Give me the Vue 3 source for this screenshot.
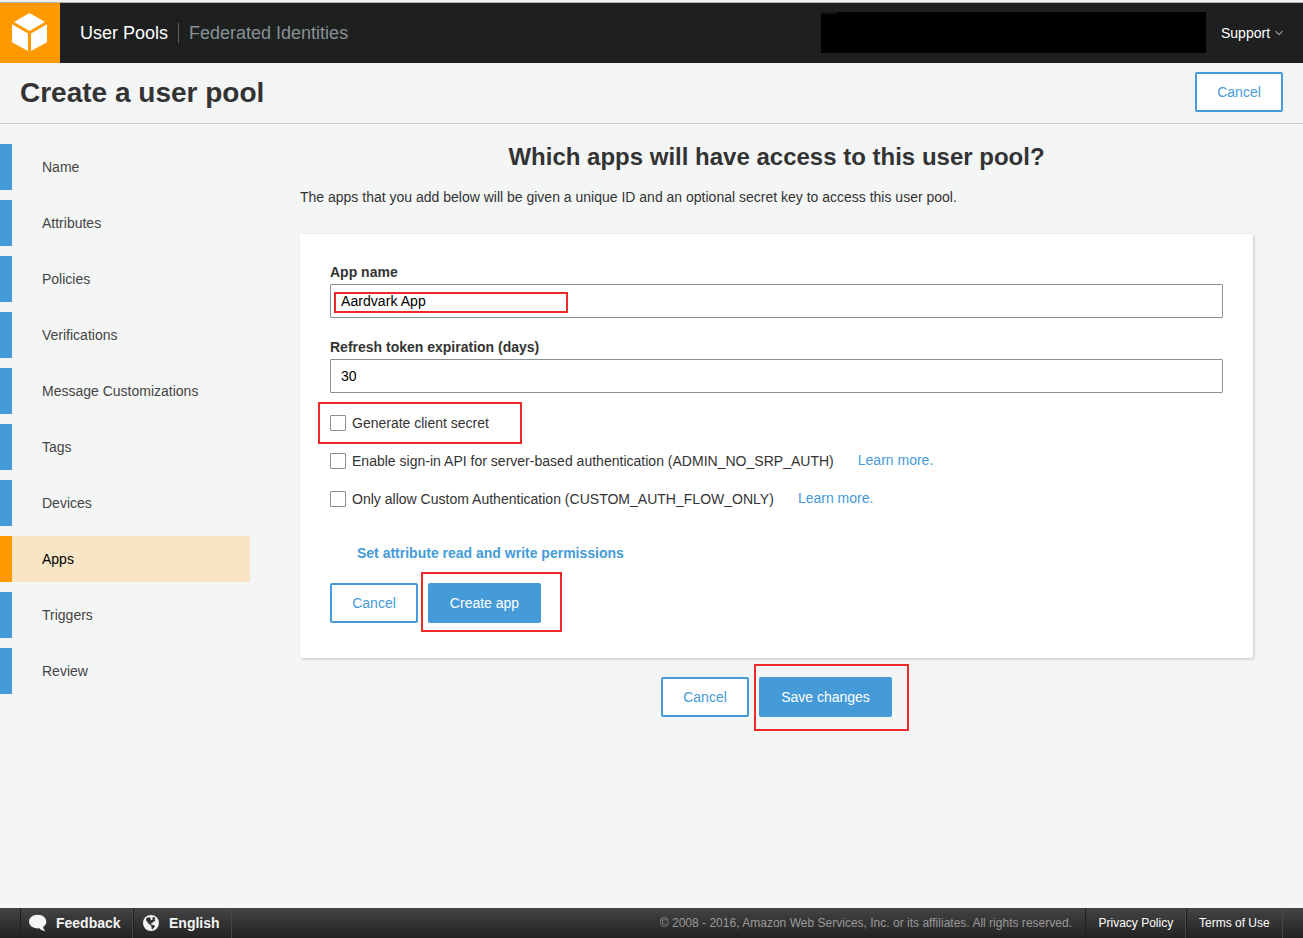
<script setup>
const steps = ['Name', 'Attributes', 'Policies', 'Verifications', 'Message Customizations', 'Tags', 'Devices', 'Apps', 'Triggers', 'Review']
const options = [
  { label: 'Generate client secret', marked: true },
  { label: 'Enable sign-in API for server-based authentication (ADMIN_NO_SRP_AUTH)', link: true },
  { label: 'Only allow Custom Authentication (CUSTOM_AUTH_FLOW_ONLY)', link: true }
]
</script>

<template>
  <div class="page">
    <div class="edge"></div>
    <header class="topbar">
      <div class="logo">
        <svg width="60" height="60" viewBox="0 0 60 60">
          <path d="M29.500 10L45 19L29.500 28L14 19Z M12 21.200L28 30.500V48L12 39.200Z M47 21.200L31 30.500V48L47 39.200Z" fill="#fff" />
        </svg>
      </div>
      <nav class="services">
        <span class="current">User Pools</span>
        <span class="divider"></span>
        <span class="other">Federated Identities</span>
      </nav>
      <div class="account"><i></i></div>
      <div class="support">
        <span>Support</span>
        <svg width="8" height="6" viewBox="0 0 8 6"><path d="M0.500 1.200L4 4.700L7.500 1.200" fill="none" stroke="#999ea1" stroke-width="1.100" /></svg>
      </div>
    </header>

    <section class="titlebar">
      <h1>Create a user pool</h1>
      <button class="btn">Cancel</button>
    </section>

    <div class="body">
      <aside class="steps">
        <div v-for="s in steps" :key="s" class="step" :class="{ active: s === 'Apps' }">{{ s }}</div>
      </aside>
      <main class="content">
        <h2>Which apps will have access to this user pool?</h2>
        <p class="intro">The apps that you add below will be given a unique ID and an optional secret key to access this user pool.</p>
        <div class="card">
          <label class="field-label">App name</label>
          <div class="field name">Aardvark App<i class="mark mark-name"></i></div>
          <label class="field-label second">Refresh token expiration (days)</label>
          <div class="field">30</div>
          <div class="options">
            <div v-for="o in options" :key="o.label" class="option">
              <span class="box"></span>
              <span class="text" :class="{ long: o.link }">{{ o.label }}</span>
              <a v-if="o.link" class="learn">Learn more.</a>
              <i v-if="o.marked" class="mark mark-secret"></i>
            </div>
          </div>
          <a class="permissions">Set attribute read and write permissions</a>
          <div class="actions">
            <button class="btn">Cancel</button>
            <div class="marked">
              <button class="btn primary create">Create app</button>
              <i class="mark mark-create"></i>
            </div>
          </div>
        </div>
        <div class="actions page-actions">
          <button class="btn">Cancel</button>
          <div class="marked">
            <button class="btn primary save">Save changes</button>
            <i class="mark mark-save"></i>
          </div>
        </div>
      </main>
    </div>

    <footer class="footer">
      <div class="cell feedback">
        <svg width="18" height="18" viewBox="0 0 18 18"><path d="M8.700 0.800C13.500 0.800 17.300 3.700 17.300 7.600C17.300 9.900 16.200 11.800 14.200 13C14.400 14.500 15.200 16 16.500 17C13.700 17 11.800 16 10.500 14.300C4.800 15 0 12 0 7.600C0 3.700 3.900 0.800 8.700 0.800Z" fill="#f4f4f4" /></svg>
        <span>Feedback</span>
      </div>
      <div class="cell language">
        <svg width="16" height="16" viewBox="0 0 16 16">
          <circle cx="8" cy="8" r="8" fill="#f4f4f4" />
          <path d="M3.200 3.600L4.800 2.500L6.500 2.200L7.900 3.200L7.200 4.300L8.500 5.200L9.800 4.300L9.300 2.800L10.600 1.900L12.400 2.900L11.300 4.300L12.600 4.900L11.500 6.300L10.100 7L8.900 8.500L7.600 8.300L8.300 9.400L10 9.900L12 10.700L11.700 12L10.500 13L9.400 14.600L8.600 13.600L8.500 11.400L7.400 10L5.600 8.800L4.300 7L3 5.300Z" fill="#303030" />
        </svg>
        <span>English</span>
      </div>
      <div class="copyright">© 2008 - 2016, Amazon Web Services, Inc. or its affiliates. All rights reserved.</div>
      <div class="cell legal privacy">Privacy Policy</div>
      <div class="cell legal terms">Terms of Use</div>
    </footer>
  </div>
</template>

<style>
body { margin: 0; background: #f4f6f6; }
</style>

<style scoped>
* { box-sizing: border-box; }
.page { display: flex; flex-direction: column; width: 1303px; height: 938px; overflow: hidden; background: #f4f6f6; color: #333; font: 14px/20px "Liberation Sans", Arial, sans-serif; }
.edge { height: 3px; flex: none; background: #f2f1f0; border-bottom: 1px solid #b0aeac; }
.topbar { height: 60px; flex: none; display: flex; align-items: center; background: #1e201f; color: #fff; }
.logo { width: 60px; height: 60px; background: #f90; }
.logo svg { display: block; }
.services { display: flex; align-items: center; margin-left: 20px; font-size: 18px; }
.divider { width: 1px; height: 20px; margin: 0 10px; background: #5c5f60; }
.other { color: #879196; }
.account { width: 385px; height: 41px; margin: 0 15px 1px auto; background: #000; }
.account i { display: block; width: 16px; height: 2px; background: #151716; }
.support { display: flex; align-items: center; gap: 5px; width: 82px; white-space: nowrap; }
.titlebar { height: 61px; flex: none; display: flex; align-items: center; justify-content: space-between; padding: 0 20px 2px; border-bottom: 1px solid #c8cccc; }
h1 { margin: 2px 0 0; font-size: 28px; line-height: 36px; color: #333; }
.btn { width: 88px; height: 40px; padding: 0; border: 2px solid #449bd8; border-radius: 2px; background: #fff; color: #449bd8; font: inherit; }
.btn.primary { background: #449bd8; color: #fff; display: block; }
.create { width: 113px; }
.save { width: 133px; }
.body { flex: 1; display: flex; min-height: 0; }
.steps { width: 250px; margin-right: 50px; padding-top: 20px; display: flex; flex-direction: column; gap: 10px; }
.step { height: 46px; line-height: 46px; padding-left: 30px; border-left: 12px solid #449bd8; color: #444; }
.step.active { border-color: #f90; background: #f8e5c6; color: #000; }
.content { width: 953px; padding-top: 18px; }
h2 { margin: 0; font-size: 24px; line-height: 30px; text-align: center; color: #333; }
.intro { margin: 15px 0 27px; }
.card { height: 424px; padding: 28px 30px; background: #fff; border-radius: 2px; box-shadow: 1px 1px 3px rgba(0, 0, 0, .2); display: flex; flex-direction: column; }
.field-label { font-weight: bold; line-height: 20px; margin-bottom: 2px; }
.second { margin-top: 19px; }
.field { position: relative; flex: none; height: 34px; line-height: 32px; padding-left: 10px; border: 1px solid #879196; border-radius: 1px; color: #000; }
.name { letter-spacing: .06px; }
.options { display: flex; flex-direction: column; gap: 18px; margin-top: 20px; }
.option { position: relative; display: flex; align-items: center; height: 20px; }
.box { width: 16px; height: 16px; margin-right: 6px; border: 1px solid #879196; border-radius: 1px; background: #fff; }
.long { letter-spacing: .013px; }
.learn { margin: -2px 0 0 24px; color: #449bd8; }
.permissions { margin: 34px 0 20px 27px; font-weight: bold; color: #449bd8; }
.actions { display: flex; gap: 10px; }
.page-actions { justify-content: center; margin-top: 19px; }
.marked { position: relative; }
.mark { position: absolute; border: 2px solid #ee2a2a; pointer-events: none; }
.mark-name { left: 3px; top: 7px; width: 234px; height: 21px; }
.mark-secret { left: -12px; top: -11px; width: 204px; height: 42px; }
.mark-create { left: -7px; top: -11px; width: 141px; height: 60px; }
.mark-save { left: -5px; top: -13px; width: 155px; height: 67px; }
.footer { height: 30px; flex: none; display: flex; padding: 0 20px; background: linear-gradient(#444, #222); color: #fff; font-size: 12px; line-height: 30px; white-space: nowrap; }
.cell { display: flex; align-items: center; border-left: 1px solid #202020; border-right: 1px solid #484848; }
.feedback, .language { font-size: 14px; font-weight: bold; color: #f4f4f4; }
.feedback { width: 113px; padding-left: 8px; gap: 9px; }
.language { width: 99px; padding-left: 9px; gap: 10px; }
.copyright { margin-left: auto; margin-right: 13px; letter-spacing: .012px; color: #999; }
.legal { padding-left: 12px; }
.privacy { width: 101px; padding-left: 12.5px; }
.terms { width: 97px; }
</style>
